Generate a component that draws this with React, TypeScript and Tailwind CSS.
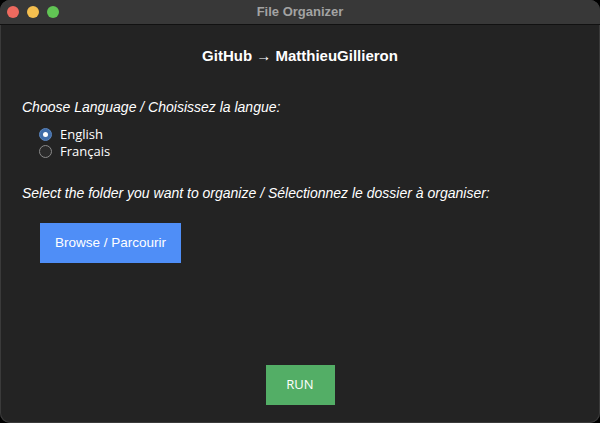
export default function App() {
  return (
    <div className="w-[600px] h-[423px] bg-black overflow-hidden">
      <div className="w-full h-full rounded-[10px] overflow-hidden bg-[#232323] flex flex-col shadow-[inset_0_0_0_1px_#3a3a3a]">
        {/* title bar */}
        <div className="relative h-[25px] shrink-0 bg-[#383838] border-b border-[#111] flex items-center justify-center">
          <div className="absolute left-[7px] top-[6px] flex gap-[8px]">
            <span className="w-[12px] h-[12px] rounded-full bg-[#ee6a5f]" />
            <span className="w-[12px] h-[12px] rounded-full bg-[#f5bf4f]" />
            <span className="w-[12px] h-[12px] rounded-full bg-[#61c554]" />
          </div>
          <span className="text-[13px] font-bold text-[#a3a3a3] font-['Liberation_Sans',Arial,sans-serif]">
            File Organizer
          </span>
        </div>

        {/* body */}
        <div className="flex-1 flex flex-col font-['Liberation_Sans',Arial,sans-serif] text-white">
          <h1 className="mt-[22px] text-center text-[15px] leading-[18px] font-bold">
            GitHub → MatthieuGillieron
          </h1>

          <p className="mt-[33px] ml-[22px] text-[14px] leading-[18px] italic">
            Choose Language / Choisissez la langue:
          </p>
          <div className="mt-[11px] ml-[39px] flex flex-col gap-[2px] text-[13px] font-['Open_Sans',sans-serif]">
            <label className="flex items-center gap-[8px] h-[15px]">
              <span className="w-[13px] h-[13px] rounded-full bg-[#3f6ca8] border border-[#5a84bd] flex items-center justify-center">
                <span className="w-[5px] h-[5px] rounded-full bg-white" />
              </span>
              English
            </label>
            <label className="flex items-center gap-[8px] h-[15px]">
              <span className="w-[13px] h-[13px] rounded-full border border-[#8a8a8a] bg-[#2a2a2a]" />
              Français
            </label>
          </div>

          <p className="mt-[25px] ml-[22px] text-[14px] leading-[18px] italic">
            Select the folder you want to organize / Sélectionnez le dossier à organiser:
          </p>

          <button className="mt-[21px] ml-[40px] w-[141px] h-[40px] bg-[#4f8ef7] text-[13.5px] text-white font-['Liberation_Sans',Arial,sans-serif]">
            Browse / Parcourir
          </button>

          <div className="mt-[102px] flex justify-center">
            <button className="w-[69px] h-[40px] bg-[#53ae66] text-[13px] text-white font-['Open_Sans',sans-serif]">
              RUN
            </button>
          </div>
        </div>
      </div>
    </div>
  )
}
